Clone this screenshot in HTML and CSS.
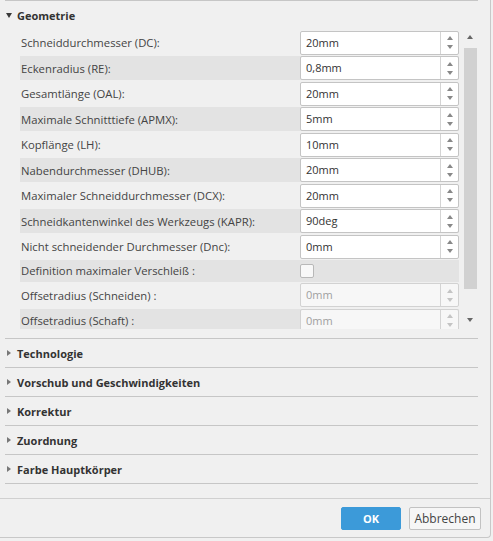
FILE: index.html
```html
<!DOCTYPE html>
<html lang="de">
<head>
<meta charset="utf-8">
<title>Werkzeug</title>
<link rel="stylesheet" href="styles.css">
</head>
<body>
<div class="window">
  <div class="content">
    <section class="section open">
      <div class="head">
        <svg class="tri" width="6" height="5" viewBox="0 0 6 5"><path d="M0 0H6L3 5Z" fill="#3a3a3a"/></svg>
        <span>Geometrie</span>
      </div>
      <div class="body">
        <div class="viewport">
          <div class="rows">
            <div class="row"><span class="label">Schneiddurchmesser (DC):</span><div class="field"><span class="val">20mm</span><span class="spin"><i class="up"></i><i class="dn"></i></span></div></div>
            <div class="row alt"><span class="label">Eckenradius (RE):</span><div class="field"><span class="val">0,8mm</span><span class="spin"><i class="up"></i><i class="dn"></i></span></div></div>
            <div class="row"><span class="label">Gesamtlänge (OAL):</span><div class="field"><span class="val">20mm</span><span class="spin"><i class="up"></i><i class="dn"></i></span></div></div>
            <div class="row alt"><span class="label">Maximale Schnitttiefe (APMX):</span><div class="field"><span class="val">5mm</span><span class="spin"><i class="up"></i><i class="dn"></i></span></div></div>
            <div class="row"><span class="label">Kopflänge (LH):</span><div class="field"><span class="val">10mm</span><span class="spin"><i class="up"></i><i class="dn"></i></span></div></div>
            <div class="row alt"><span class="label">Nabendurchmesser (DHUB):</span><div class="field"><span class="val">20mm</span><span class="spin"><i class="up"></i><i class="dn"></i></span></div></div>
            <div class="row"><span class="label">Maximaler Schneiddurchmesser (DCX):</span><div class="field"><span class="val">20mm</span><span class="spin"><i class="up"></i><i class="dn"></i></span></div></div>
            <div class="row alt"><span class="label">Schneidkantenwinkel des Werkzeugs (KAPR):</span><div class="field"><span class="val">90deg</span><span class="spin"><i class="up"></i><i class="dn"></i></span></div></div>
            <div class="row"><span class="label">Nicht schneidender Durchmesser (Dnc):</span><div class="field"><span class="val">0mm</span><span class="spin"><i class="up"></i><i class="dn"></i></span></div></div>
            <div class="row alt cb"><span class="label">Definition maximaler Verschleiß :</span><span class="check"></span></div>
            <div class="row"><span class="label">Offsetradius (Schneiden) :</span><div class="field disabled"><span class="val">0mm</span><span class="spin"><i class="up"></i><i class="dn"></i></span></div></div>
            <div class="row alt"><span class="label">Offsetradius (Schaft) :</span><div class="field disabled"><span class="val">0mm</span><span class="spin"><i class="up"></i><i class="dn"></i></span></div></div>
          </div>
          <div class="scrollbar">
            <i class="sup"></i>
            <div class="track"><div class="thumb"></div></div>
            <i class="sdn"></i>
          </div>
        </div>
      </div>
    </section>
    <section class="section">
      <div class="head"><svg class="tri c" width="4" height="6" viewBox="0 0 4 6"><path d="M0 0L4 3L0 6Z" fill="#777"/></svg><span>Technologie</span></div>
    </section>
    <section class="section">
      <div class="head"><svg class="tri c" width="4" height="6" viewBox="0 0 4 6"><path d="M0 0L4 3L0 6Z" fill="#777"/></svg><span>Vorschub und Geschwindigkeiten</span></div>
    </section>
    <section class="section">
      <div class="head"><svg class="tri c" width="4" height="6" viewBox="0 0 4 6"><path d="M0 0L4 3L0 6Z" fill="#777"/></svg><span>Korrektur</span></div>
    </section>
    <section class="section">
      <div class="head"><svg class="tri c" width="4" height="6" viewBox="0 0 4 6"><path d="M0 0L4 3L0 6Z" fill="#777"/></svg><span>Zuordnung</span></div>
    </section>
    <section class="section">
      <div class="head"><svg class="tri c" width="4" height="6" viewBox="0 0 4 6"><path d="M0 0L4 3L0 6Z" fill="#777"/></svg><span>Farbe Hauptkörper</span></div>
    </section>
  </div>
  <div class="footer">
    <button class="btn ok">OK</button>
    <button class="btn cancel">Abbrechen</button>
  </div>
</div>
</body>
</html>
```
FILE: styles.css
```css
html, body {
  margin: 0;
  padding: 0;
}
body {
  width: 493px;
  height: 541px;
  overflow: hidden;
  background: #f0f0f0;
  font-family: "Open Sans", "Noto Sans", "DejaVu Sans", sans-serif;
  font-size: 11px;
  color: #444;
}
.window {
  width: 490px;
  height: 537px;
  border-right: 1px solid #c8c8c8;
  border-bottom: 1px solid #c8c8c8;
  border-bottom-right-radius: 4px;
  display: flex;
  flex-direction: column;
  box-sizing: content-box;
}
.content {
  flex: 1;
  border-top: 1px solid #c6c6c6;
  margin-left: 5px;
  margin-right: 12px;
  padding: 0;
}
.section {
  border-bottom: 1px solid #c6c6c6;
}
.head {
  height: 28px;
  display: flex;
  align-items: center;
  gap: 5px;
  padding-left: 1px;
  font-weight: bold;
  color: #333;
  font-size: 11px;
}
.section.open .head {
  height: 29px;
}
.tri.c {
  margin-left: 1px;
  margin-right: 1px;
}
.body {
  padding: 0 0 9px 15px;
}
.viewport {
  height: 299px;
  overflow: hidden;
  display: flex;
  gap: 2px;
}
.rows {
  width: 439px;
  padding-top: 0.5px;
  display: flex;
  flex-direction: column;
  gap: 1.5px;
}
.row {
  flex: 0 0 24px;
  display: flex;
  align-items: center;
}
.row.cb {
  flex-basis: 21.5px;
}
.row.alt {
  background: #e3e3e3;
}
.label {
  width: 279px;
  padding-left: 1px;
  white-space: nowrap;
  overflow: hidden;
  font-size: 11.3px;
}
.field {
  width: 157px;
  height: 22px;
  border: 1px solid #c4c4c4;
  border-radius: 2px;
  background: #fff;
  display: flex;
}
.val {
  flex: 1;
  line-height: 22px;
  padding-left: 5px;
  color: #333;
  font-size: 11px;
}
.spin {
  width: 17px;
  border-left: 1px solid #d4d4d4;
  display: flex;
  flex-direction: column;
  align-items: center;
  justify-content: center;
  gap: 5px;
}
.spin i {
  display: block;
  width: 0;
  height: 0;
  border-left: 3.5px solid transparent;
  border-right: 3.5px solid transparent;
}
.spin .up {
  border-bottom: 4px solid #888;
}
.spin .dn {
  border-top: 4px solid #888;
}
.field.disabled {
  background: #f7f7f7;
  border-color: #d2d2d2;
}
.field.disabled .val {
  color: #a0a0a0;
}
.field.disabled .spin .up {
  border-bottom-color: #c4c4c4;
}
.field.disabled .spin .dn {
  border-top-color: #c4c4c4;
}
.check {
  width: 12px;
  height: 12px;
  border: 1px solid #b8b8b8;
  border-radius: 2px;
  background: #f8f8f8;
}
.scrollbar {
  width: 17px;
  display: flex;
  flex-direction: column;
  align-items: center;
}
.scrollbar i {
  display: block;
  width: 0;
  height: 0;
  border-left: 3px solid transparent;
  border-right: 3px solid transparent;
}
.sup {
  margin-top: 5px;
  border-bottom: 4px solid #666;
}
.sdn {
  margin-bottom: 7px;
  border-top: 4px solid #666;
}
.track {
  flex: 1;
  width: 13px;
  padding-top: 9px;
  margin-bottom: 24px;
  margin-left: 1px;
}
.thumb {
  height: 241px;
  background: #d1d1d1;
}
.footer {
  height: 39px;
  border-top: 1px solid #d0d0d0;
  display: flex;
  justify-content: flex-end;
  align-items: flex-start;
  gap: 8px;
  padding: 8px 9px 0 0;
  box-sizing: border-box;
}
.btn {
  height: 23px;
  font-family: "Open Sans", "Noto Sans", sans-serif;
  font-size: 11px;
  border-radius: 2px;
  padding: 0;
  cursor: pointer;
}
.ok {
  width: 60px;
  background: #3c9ad9;
  border: 1px solid #3c9ad9;
  color: #fff;
  font-weight: bold;
}
.cancel {
  width: 72px;
  background: #f6f6f6;
  border: 1px solid #c2c2c2;
  color: #444;
  font-size: 12px;
}
```
